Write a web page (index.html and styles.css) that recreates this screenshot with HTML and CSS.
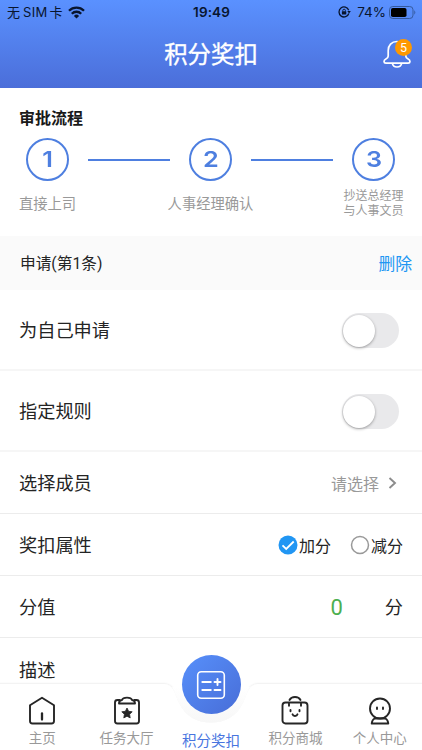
FILE: index.html
```html
<!DOCTYPE html>
<html lang="zh-CN">
<head>
<meta charset="utf-8">
<title>积分奖扣</title>
<link rel="stylesheet" href="styles.css">
</head>
<body>
<div class="app">
  <header class="header">
    <div class="status">
      <div class="status-left">
        <span class="carrier">无<span class="sim">SIM</span>卡</span>
        <svg class="wifi" width="17" height="13" viewBox="0 0 17 13"><g fill="none" stroke="#08152e" stroke-width="2.3"><path d="M1 4.8a10.6 10.6 0 0 1 15 0"/><path d="M3.8 7.700a6.6 6.6 0 0 1 9.4 0"/></g><path d="M5.9 9.900a3.700 3.700 0 0 1 5.200 0L8.500 12.500z" fill="#08152e"/></svg>
      </div>
      <span class="time">19:49</span>
      <div class="status-right">
        <svg width="13" height="12" viewBox="0 0 13 12"><path d="M10.700 4.200A5 5 0 1 0 10.800 7.500" fill="none" stroke="#08152e" stroke-width="1.300"/><path d="M9.300 5h3.500l-1.700 2.400z" fill="#08152e"/><rect x="3.900" y="5.200" width="4.400" height="3.300" rx=".5" fill="#08152e"/><path d="M4.800 5.400V4.500a1.300 1.300 0 0 1 2.600 0v.9" fill="none" stroke="#08152e" stroke-width=".9"/></svg>
        <span class="percent">74%</span>
        <svg width="27" height="13" viewBox="0 0 27 13"><rect x=".5" y=".5" width="23.500" height="12" rx="3.300" fill="none" stroke="#345a9f"/><rect x="2" y="2" width="15.500" height="9" rx="1.800" fill="#000"/><path d="M25.300 4.300q2 2.200 0 4.400z" fill="#345a9f"/></svg>
      </div>
    </div>
    <div class="titlebar">
      <h1>积分奖扣</h1>
      <div class="bell">
        <svg width="28" height="29" viewBox="0 0 28 29" fill="none" stroke="#fff" stroke-width="1.700" stroke-linejoin="round"><path d="M14 1.500C8.500 1.500 5.200 5.300 5.200 10.500v5.500c0 1.700-.8 2.400-2.300 3.100-2.700 1.300-2.300 4.100 0 4.100h22.200c2.300 0 2.700-2.800 0-4.100-1.500-.7-2.300-1.400-2.300-3.100v-5.500C22.800 5.300 19.500 1.500 14 1.500z"/><path d="M9.300 23.400a4.800 4.500 0 0 0 9.400 0"/></svg>
        <span class="badge">5</span>
      </div>
    </div>
  </header>

  <section class="process">
    <h2>审批流程</h2>
    <div class="steps">
      <div class="step"><span class="num"><b>1</b></span><span class="label">直接上司</span></div>
      <i class="line"></i>
      <div class="step"><span class="num"><b>2</b></span><span class="label">人事经理确认</span></div>
      <i class="line"></i>
      <div class="step"><span class="num"><b>3</b></span><span class="label small">抄送总经理<br>与人事文员</span></div>
    </div>
  </section>

  <div class="group"><span>申请(第1条)</span><a class="delete">删除</a></div>

  <div class="row tall"><span>为自己申请</span><span class="switch"></span></div>
  <div class="row tall"><span>指定规则</span><span class="switch"></span></div>
  <div class="row"><span>选择成员</span>
    <span class="picker">请选择<svg width="9" height="12" viewBox="0 0 9 12"><path d="M1.500 1l5.500 5-5.500 5" fill="none" stroke="#8c8c8c" stroke-width="1.900"/></svg></span>
  </div>
  <div class="row"><span>奖扣属性</span>
    <span class="radios">
      <span class="radio"><svg width="20" height="20" viewBox="0 0 20 20"><circle cx="10" cy="10" r="9.500" fill="#2196f3"/><path d="M4.500 10.300l3.700 3.600L15.700 6.500" fill="none" stroke="#fff" stroke-width="1.800"/></svg>加分</span>
      <span class="radio"><svg width="20" height="20" viewBox="0 0 20 20"><circle cx="10" cy="10" r="8.500" fill="#fff" stroke="#999" stroke-width="1.500"/></svg>减分</span>
    </span>
  </div>
  <div class="row"><span>分值</span><span class="score"><b>0</b><span>分</span></span></div>
  <div class="row last"><span>描述</span></div>

  <nav class="nav">
    <svg class="nav-bg" width="422" height="75" viewBox="0 0 422 75">
      <defs><filter id="edge" x="-5%" y="-20%" width="110%" height="140%"><feDropShadow dx="0" dy="0" stdDeviation="1.300" flood-color="#000" flood-opacity=".14"/></filter>
      <linearGradient id="dip" x1="0" y1="0" x2="0" y2="1"><stop offset="0" stop-color="#fff"/><stop offset="1" stop-color="#f7f7f7"/></linearGradient></defs>
      <path d="M-6 9H162C174 9 174 17 179 28C186 42 197 47.500 211 47.500S236 42 243 28C248 17 248 9 260 9H428V85H-6z" fill="#fff" filter="url(#edge)"/>
      <path d="M172 12C175 16 176 22 179 28C186 42 197 47.500 211 47.500S236 42 243 28C246 22 247 16 250 12z" fill="url(#dip)"/>
    </svg>
    <a class="tab"><svg width="30" height="30" viewBox="0 0 30 30" fill="none" stroke="#262626" stroke-width="1.900" stroke-linejoin="round" stroke-linecap="round"><path d="M3 9.300L15 1.700l12 7.600V25q0 2.500-2.500 2.500h-19Q3 27.500 3 25z"/><path d="M15 17.500v6" stroke-width="2.300"/></svg><span>主页</span></a>
    <a class="tab"><svg width="30" height="30" viewBox="0 0 30 30" fill="none" stroke="#262626" stroke-width="1.900" stroke-linejoin="round"><path d="M8 4H5.500Q3 4 3 6.500V25q0 2.500 2.500 2.500h19Q27 27.500 27 25V6.500Q27 4 24.500 4H22"/><path d="M7 7.500h16C23 4.500 21.500 4 20 4 19 .8 11 .8 10 4 8.500 4 7 4.500 7 7.500z"/><path d="M15 12l1.600 3.300 3.600.5-2.600 2.500.6 3.600-3.200-1.700-3.200 1.700.6-3.600-2.600-2.500 3.600-.5z" fill="#262626" stroke-width=".8"/></svg><span>任务大厅</span></a>
    <a class="tab active"><span class="fab"><svg width="30" height="30" viewBox="0 0 30 30" fill="none" stroke="#fff" stroke-width="1.600" stroke-linecap="round"><rect x="1.700" y="1.700" width="26.600" height="26.600" rx="3.500"/><g stroke-width="1.900"><path d="M6.300 12h8.500M6.300 20h8.500M18.500 12h6M21.500 9v6M18.500 20h6"/></g></svg></span><span>积分奖扣</span></a>
    <a class="tab"><svg width="30" height="30" viewBox="0 0 30 30" fill="none" stroke="#262626" stroke-width="1.900" stroke-linejoin="round" stroke-linecap="round"><rect x="2.500" y="6.500" width="25" height="21" rx="3"/><path d="M9.500 4c2-4 9-4 11 0M9 7.500v2.300M21 7.500v2.300M10.500 14v1.300M19.500 14v1.300M12.500 18.300c.7 2.300 4.300 2.300 5 0"/></svg><span>积分商城</span></a>
    <a class="tab"><svg width="30" height="30" viewBox="0 0 30 30" fill="none" stroke="#262626" stroke-width="1.900" stroke-linejoin="round" stroke-linecap="round"><circle cx="15" cy="12.500" r="10"/><path d="M9.500 22.500c-1.800 1-2.500 2.500-2.800 5h16.600C23 25 22.300 23.500 20.500 22.500z"/><path d="M12 11.500v1.500M18 11.500v1.500"/></svg><span>个人中心</span></a>
  </nav>
</div>
</body>
</html>
```
FILE: styles.css
```css
* { box-sizing: border-box; }
body {
  margin: 0;
  font-family: Roboto, "Noto Sans CJK SC", sans-serif;
  color: #242424;
  background: #fff;
}
.app {
  display: flex;
  flex-direction: column;
  position: relative;
  width: 422px;
  height: 750px;
  overflow: hidden;
}
.header {
  flex: none;
  height: 88px;
  color: #fff;
  background: linear-gradient(#5a91ff, #4b6ed9);
}
.status {
  display: grid;
  grid-template-columns: 1fr auto 1fr;
  align-items: center;
  height: 24px;
  padding: 0 6px 0 7px;
  color: #08152e;
  font: 13.5px/24px Inter, "Noto Sans CJK SC", sans-serif;
}
.status-left, .status-right { display: flex; align-items: center; }
.status-left { gap: 5px; }
.carrier { font-size: 13px; }
.sim { margin: 0 2px 0 3px; letter-spacing: .3px; }
.status-right { justify-content: flex-end; }
.percent { margin: 0 3px 0 6px; }
.time { font-weight: 600; letter-spacing: .1px; }
.titlebar {
  display: grid;
  grid-template-columns: 1fr auto 1fr;
  align-items: center;
  height: 60px;
}
.titlebar h1 {
  grid-column: 2;
  margin: 2px 0 0;
  font-size: 23.4px;
  font-weight: 400;
  line-height: 36px;
  -webkit-text-stroke: .35px #fff;
}
.bell { position: relative; justify-self: end; height: 29px; margin-right: 11px; }
.bell svg { display: block; }
.badge {
  position: absolute;
  left: 12px;
  top: -1px;
  width: 17px;
  height: 17px;
  border-radius: 50%;
  background: #ff9800;
  font-size: 12.5px;
  line-height: 17px;
  text-align: center;
}
.process { flex: none; height: 148px; padding: 19px 27px 0 26px; }
.process h2 {
  margin: 0 0 6px -7px;
  font-size: 16px;
  font-weight: 700;
  line-height: 24px;
  color: #191919;
}
.steps { display: flex; justify-content: space-between; align-items: flex-start; }
.step { display: flex; flex-direction: column; align-items: center; width: 43px; }
.num {
  flex: none;
  width: 43px;
  height: 43px;
  margin-top: 1px;
  border: 2px solid #4e7fe0;
  border-radius: 50%;
  color: #4e7fe0;
  font: 600 22px/39px Inter, sans-serif;
  text-align: center;
}
.num b { display: inline-block; font-weight: 600; transform: scaleX(1.15); }
.line { width: 82px; height: 2px; margin-top: 22px; background: #4e7fe0; }
.label {
  margin-top: 12px;
  color: #999;
  font-size: 14.3px;
  line-height: 22px;
  white-space: nowrap;
}
.label.small { margin-top: 8px; font-size: 12px; line-height: 14.5px; text-align: center; }
.group {
  display: flex;
  flex: none;
  justify-content: space-between;
  align-items: center;
  height: 54px;
  padding: 0 10px 1px 20px;
  background: #fafafa;
  font-size: 15.7px;
}
.delete { color: #2196f3; font-size: 16.8px; }
.row {
  display: flex;
  flex: none;
  justify-content: space-between;
  align-items: center;
  height: 62px;
  padding: 0 19px;
  border-bottom: 1px solid #ececec;
  font-size: 18.2px;
}
.row > span:first-child { margin-top: -1px; }
.row.tall { height: 81px; padding-right: 23px; border-bottom: 2px solid #f6f6f6; }
.row.tall > span:first-child { margin-top: -2px; }
.row.last { border: 0; }
.switch {
  width: 57px;
  height: 35px;
  margin-top: 1px;
  padding: 1px;
  border-radius: 18px;
  background: #e9e9eb;
}
.switch::before {
  content: "";
  display: block;
  width: 32px;
  height: 32px;
  margin: 1px 0 0 0;
  border-radius: 50%;
  background: #fff;
  box-shadow: 0 1px 3px rgba(0, 0, 0, .35);
}
.picker { display: flex; align-items: center; gap: 9px; padding-right: 6px; color: #999; font-size: 16px; }
.radios { display: flex; gap: 19px; }
.radio { display: flex; align-items: center; gap: 1px; font-size: 16px; }
.score { display: flex; align-items: center; gap: 42px; margin-top: -2px; }
.score b { margin-top: 4px; color: #4caf50; font-size: 22px; font-weight: 400; }
.nav {
  position: absolute;
  left: 0;
  bottom: 0;
  display: flex;
  width: 422px;
  height: 75px;
}
.nav-bg { position: absolute; left: 0; top: 0; }
.tab {
  position: relative;
  display: flex;
  flex: 1;
  flex-direction: column;
  align-items: center;
  padding-top: 21px;
  color: #999;
  font-size: 13.5px;
  line-height: 20px;
  white-space: nowrap;
}
.tab > svg { margin-bottom: 2px; }
.tab.active { padding-top: 0; color: #4875df; font-size: 14.5px; }
.fab {
  display: flex;
  flex: none;
  justify-content: center;
  align-items: center;
  width: 59px;
  height: 59px;
  margin: -20px 0 18px;
  border-radius: 50%;
  background: linear-gradient(135deg, #5790fb, #486dd7);
}
```
